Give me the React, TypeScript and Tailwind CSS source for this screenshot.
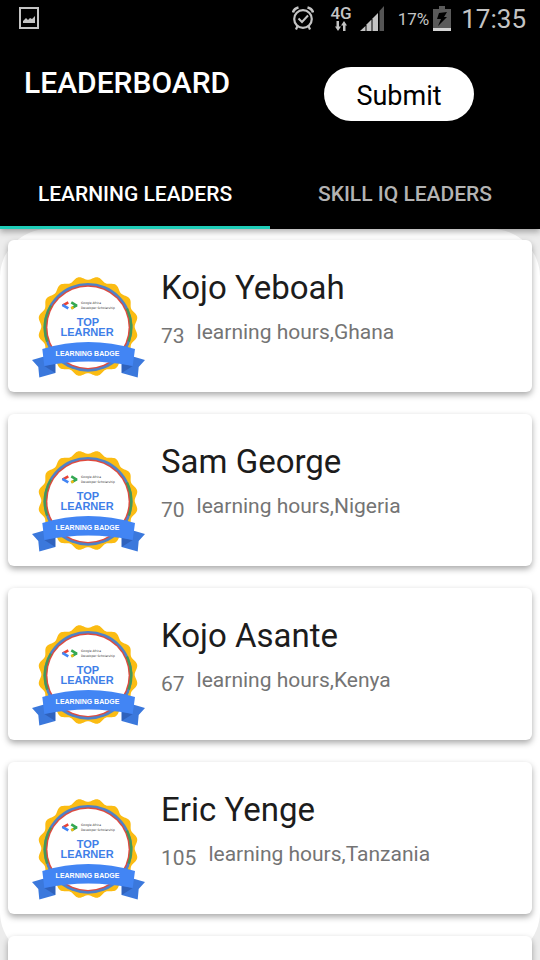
import React, { useState } from "react";

type Leader = { name: string; hours: number; country: string };

const leaders: Leader[] = [
  { name: "Kojo Yeboah", hours: 73, country: "Ghana" },
  { name: "Sam George", hours: 70, country: "Nigeria" },
  { name: "Kojo Asante", hours: 67, country: "Kenya" },
  { name: "Eric Yenge", hours: 105, country: "Tanzania" },
];

// Scalloped edge of the badge: a circle whose radius swells 16 times.
const scallop = Array.from({ length: 320 }, (_, i) => {
  const a = (i / 320) * Math.PI * 2;
  const r = 48.4 - 1.7 * Math.cos(16 * a);
  return `${(88 + r * Math.sin(a)).toFixed(2)},${(326.5 - r * Math.cos(a)).toFixed(2)}`;
}).join(" ");

function Badge() {
  return (
    <svg viewBox="32 276 114 104" className="h-[104px] w-[114px] shrink-0" role="img" aria-label="Top learner badge">
      <polygon points={scallop} fill="#fbbc13" />
      <circle cx="88" cy="327.3" r="44.4" fill="#4f82c8" />
      <path d="M50 305A44.4 44.4 0 0 0 46 342L88 327Z" fill="#43985c" />
      <path d="M128 308A44.4 44.4 0 0 1 130 342L88 327Z" fill="#43985c" />
      <circle cx="88" cy="327.3" r="42" fill="#df4a3e" />
      <circle cx="88" cy="327.3" r="40.6" fill="#fff" />
      <g fill="none" strokeWidth="2.6">
        <path d="M68.3 302.4L62.5 305.6" stroke="#ea4335" />
        <path d="M62.4 304.8L68.3 308.4" stroke="#4285f4" />
        <path d="M71.3 302.4L77 305.8" stroke="#34a853" />
        <path d="M77 305.2L71.3 308.4" stroke="#34a853" />
        <path d="M73.5 307.2L71.3 308.4" stroke="#f4b912" />
      </g>
      <g fontFamily="'DejaVu Sans', sans-serif">
        <text x="81" y="304" fontSize="3" fill="#333">Google Africa</text>
        <text x="81" y="309" fontSize="3" fill="#333">Developer Scholarship</text>
      </g>
      <g fill="#3f7fe8" fontWeight="700" textAnchor="middle" fontFamily="'Liberation Sans', Arial, sans-serif">
        <text x="88" y="326" fontSize="11">TOP</text>
        <text x="87" y="336" fontSize="11">LEARNER</text>
      </g>
      <path d="M32 360L44 356.5L55.3 363V373L39.3 377.5L38.3 367Z" fill="#3b78dc" />
      <path d="M145 360L133 356.5L121.7 363V373L137.7 377.5L138.7 367Z" fill="#3b78dc" />
      <path d="M44.3 366L55.3 363.5V373Z" fill="#2f62bd" />
      <path d="M132.7 366L121.7 363.5V373Z" fill="#2f62bd" />
      <path d="M42.3 349Q88 335 135 349L132.7 366Q88 357 44.3 366Z" fill="#4285f4" />
      <text x="87.5" y="356" fontSize="7" fontWeight="700" fill="#fff" textAnchor="middle" fontFamily="'Liberation Sans', Arial, sans-serif">
        LEARNING BADGE
      </text>
    </svg>
  );
}

function StatusBar() {
  return (
    <div className="flex h-9 items-center justify-between pl-[19px] pr-[14px] text-[#c4c4c4]">
      <svg viewBox="0 0 20 22" className="h-[22px] w-5">
        <rect x="1" y="1" width="18" height="20" fill="none" stroke="currentColor" strokeWidth="2" />
        <path d="M4 16V14L7 11L9 13L11 11L13 12L16 9V16Z" fill="currentColor" />
      </svg>
      <div className="flex items-center">
        <svg viewBox="0 0 22 24" className="mr-4 h-6 w-[22px]" fill="none" stroke="currentColor">
          <circle cx="11" cy="13" r="8.8" strokeWidth="2.2" />
          <path d="M1 6.5Q2 2.5 6.5 1.5M21 6.5Q20 2.5 15.5 1.5" strokeWidth="2.6" />
          <path d="M6.5 12.5L10 16L16 9.5" strokeWidth="2" />
          <path d="M5.5 20L4 23.5M16.5 20L18 23.5" strokeWidth="2.2" />
        </svg>
        <div className="mr-2 flex flex-col items-center">
          <span className="text-[17px] font-medium leading-4">4G</span>
          <svg viewBox="0 0 12 10" className="h-[10px] w-3" fill="currentColor">
            <path d="M1.5 0H4V5.5H6L3 10L0 5.5H1.5Z" />
            <path d="M8 10H10.5V4.5H12L9 0L6 4.5H8Z" />
          </svg>
        </div>
        <svg viewBox="0 0 24 25" className="mr-[14px] h-[25px] w-6" fill="currentColor">
          <path d="M0 25L5.5 20V25Z" />
          <path d="M6.5 18.5L11.5 13.5V25H6.5Z" />
          <path d="M12.5 12.5L18 7V25H12.5Z" />
          <path d="M19.5 5L24 0V25H19.5Z" fill="#555" />
        </svg>
        <span className="mr-1 pt-0.5 text-[17px] leading-6">17%</span>
        <svg viewBox="0 0 18 25" className="mr-[10px] h-[25px] w-[18px]">
          <path d="M6 0H12V3H18V25H0V3H6Z" fill="#5a5a5a" />
          <path d="M0 22H18V25H0Z" fill="#d4d4d4" />
          <path d="M6 7L14 6L11 11H14L5 20L8 13H4Z" fill="#000" />
        </svg>
        <span className="pt-0.5 text-[26px] leading-8">17:35</span>
      </div>
    </div>
  );
}

const cardClass = "flex h-[152px] items-start rounded-md bg-white pl-6 pt-9 shadow-[0_3px_6px_rgba(0,0,0,0.34)]";

function LeaderCard({ leader }: { leader: Leader }) {
  return (
    <li className={cardClass}>
      <Badge />
      <div className="-mt-2 ml-[15px]">
        <h2 className="text-[33px] leading-10 text-[#1c1c1c]">{leader.name}</h2>
        <p className="mt-2 flex gap-3 text-[21px] leading-8 text-[#747474]">
          <span className="pt-1">{leader.hours}</span>
          <span>learning hours,{leader.country}</span>
        </p>
      </div>
    </li>
  );
}

const tabs = ["LEARNING LEADERS", "SKILL IQ LEADERS"];

export default function App() {
  const [active, setActive] = useState(0);
  return (
    <div className="flex h-screen flex-col overflow-hidden bg-[#ececec] font-[Roboto,sans-serif]">
      <header className="relative z-10 shrink-0 bg-black shadow-[0_3px_6px_rgba(0,0,0,0.3)]">
        <StatusBar />
        <div className="flex h-[124px] items-start justify-between pl-6 pr-[66px] pt-[31px]">
          <h1 className="text-[30px] font-medium leading-8 text-white">LEADERBOARD</h1>
          <button type="button" className="h-[54px] w-[150px] rounded-full bg-white pt-1 text-[27px] leading-8 text-black">
            Submit
          </button>
        </div>
        <div role="tablist" className="grid grid-cols-2">
          {tabs.map((tab, i) => (
            <button
              key={tab}
              type="button"
              role="tab"
              aria-selected={i === active}
              onClick={() => setActive(i)}
              className={
                i === active
                  ? "h-[69px] border-b-3 border-[#1fcdb8] pt-1 text-[21px] font-medium text-white"
                  : "h-[69px] border-b-3 border-black pt-1 text-[21px] font-medium text-[#b3b3b3]"
              }
            >
              {tab}
            </button>
          ))}
        </div>
      </header>
      <main className="min-h-0 flex-1 rounded-[48px] bg-white">
        <ul className="flex flex-col gap-[22px] px-2 pt-[11px]">
          {leaders.map((leader) => (
            <LeaderCard key={leader.name} leader={leader} />
          ))}
          <li className={cardClass} aria-hidden="true" />
        </ul>
      </main>
    </div>
  );
}
